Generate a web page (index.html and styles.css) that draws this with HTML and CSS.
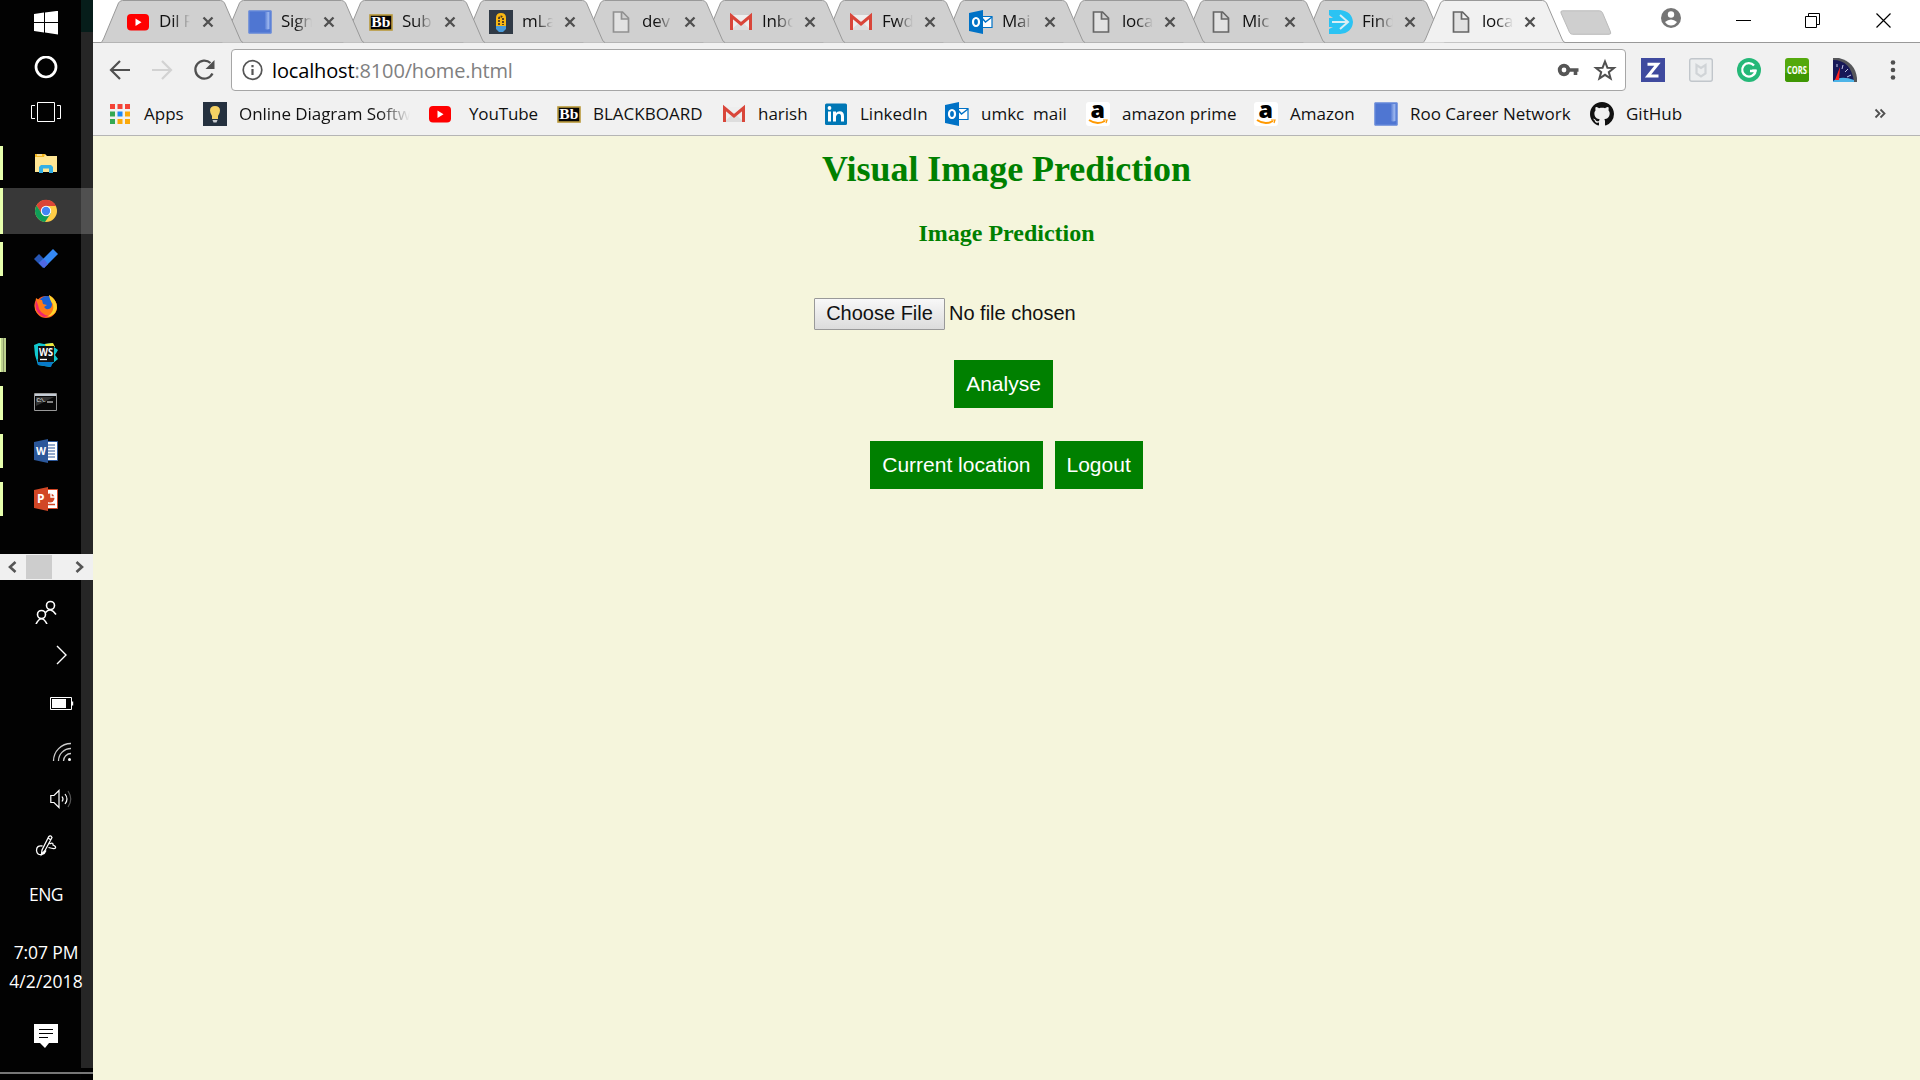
FILE: index.html
```html
<!DOCTYPE html>
<html lang="en">
<head>
<meta charset="utf-8">
<title>Visual Image Prediction</title>
<link rel="stylesheet" href="styles.css">
</head>
<body>
<svg class="defs" aria-hidden="true">
  <defs>
    <linearGradient id="roofill"><stop offset=".5" stop-color="#4f76d2"/><stop offset=".85" stop-color="#9db7ee"/><stop offset="1" stop-color="#5e84da"/></linearGradient>
    <symbol id="tab" viewBox="0 0 142 43"><path d="M0 42.5 Q1 42 2.500 39 L17.500 3 Q19 .5 21.500 .5 H119.500 Q122 .5 123.500 3 L139 39 Q140 42 142 42.500" stroke="#999"/></symbol>
    <symbol id="x" viewBox="0 0 24 24"><path d="M7.500 7.500 16.500 16.500M16.500 7.500 7.500 16.500" stroke="#505050" stroke-width="2.300"/></symbol>
    <symbol id="yt" viewBox="0 0 24 24"><rect x="1" y="4" width="22" height="16.500" rx="4" fill="#f00"/><path d="M9.500 8.500v7.500l6-3.700z" fill="#fff"/></symbol>
    <symbol id="roo" viewBox="0 0 24 24"><rect x=".5" y=".5" width="23" height="23" fill="#4f76d2"/><path d="M11 2h11v17q-8 2-11-6z" fill="url(#roofill)"/><path d="M1 1v22h22V1z" stroke="#6d8edc" fill="none"/></symbol>
    <symbol id="bb" viewBox="0 0 24 24"><rect x="1" y="5" width="22" height="15" fill="#050505" stroke="#b9993b" stroke-width="1.600"/><text x="2.300" y="17" textLength="19" lengthAdjust="spacingAndGlyphs" font-family="Liberation Serif,serif" font-weight="bold" font-size="14" fill="#fff">Bb</text></symbol>
    <symbol id="mlab" viewBox="0 0 24 24"><path fill="#303a46" d="M0 0h24v24H0z"/><path d="M7 16V8q0-5 5-5t5 5v8z" fill="#f9b814"/><path d="M10 15V8q2-3 4 0v7" fill="none" stroke="#45382b" stroke-width="1.800" stroke-dasharray="2 1"/><path d="M7 16h10v3l-3 3h-4l-3-3z" fill="#4a9bd9"/></symbol>
    <symbol id="doc" viewBox="0 0 24 24"><path d="M5 2h9l6 6v14H5zM13 2v7h7" fill="#e2e2e2" stroke="currentColor" stroke-width="1.700" transform="translate(-.5 0)"/></symbol>
    <symbol id="gm" viewBox="0 0 24 24"><path d="M2 5h20v15H2z" fill="#eee"/><path d="m2 20 10-9 10 9z" fill="#ddd"/><path d="M2.500 20V6L12 14l9.500-8v14" fill="none" stroke="#d9463a" stroke-width="3"/></symbol>
    <symbol id="ol" viewBox="0 0 24 24"><path d="M11 6.500h12v11H11z" fill="#fff" stroke="#0072c6" stroke-width="1.200"/><path d="m12 7 4.500 5L23 7" fill="none" stroke="#0072c6" stroke-width="1.500"/><path d="M0 3 14 0v24L0 21z" fill="#0072c6"/><ellipse cx="7" cy="12" rx="3" ry="4" fill="none" stroke="#fff" stroke-width="2.200"/></symbol>
    <symbol id="find" viewBox="0 0 24 24"><path d="M0 0h11q12 1 13 12-1 11-13 12H0v-5l4-2H0V8h4L0 5z" fill="#2bc3f3"/><path d="M3 12h16M11 5l8 7-8 7" fill="none" stroke="#d9eef4" stroke-width="2"/></symbol>
    <symbol id="amz" viewBox="0 0 24 24"><rect width="24" height="24" rx="3" fill="#fff"/><text x="4.500" y="16" font-family="Open Sans,sans-serif" font-weight="800" font-size="23" textLength="14.500" lengthAdjust="spacingAndGlyphs">a</text><path d="M3 18q8 5.500 16 1" fill="none" stroke="#ff9900" stroke-width="2"/><path d="M17 18h4l-1 3" fill="none" stroke="#ff9900" stroke-width="1.200"/></symbol>
    <symbol id="li" viewBox="0 0 24 24"><rect x="1" y="1.500" width="22" height="21.500" rx="1.500" fill="#0077b5"/><path d="M4 9.500h3v10H4zM9 9.500h3V11q1-1.800 3.700-1.800 4.300 0 4.300 5v5.300h-3v-5q0-2.700-2.200-2.700T12 14.500v5H9z" fill="#fff"/><circle cx="5.500" cy="6" r="1.900" fill="#fff"/></symbol>
    <symbol id="gh" viewBox="0 0 16 16"><path fill="#111" d="M8 0C3.580 0 0 3.580 0 8c0 3.540 2.290 6.530 5.470 7.590.4.070.55-.17.55-.38 0-.19-.01-.82-.01-1.490-2.010.37-2.530-.49-2.690-.94-.09-.23-.48-.94-.82-1.130-.28-.15-.68-.52-.01-.53.63-.01 1.080.58 1.230.82.72 1.210 1.870.87 2.330.66.070-.52.28-.87.510-1.070-1.780-.2-3.640-.89-3.640-3.950 0-.87.310-1.590.820-2.150-.08-.2-.36-1.020.080-2.120 0 0 .67-.21 2.200.82.640-.18 1.320-.27 2-.27s1.360.090 2 .27c1.530-1.040 2.200-.82 2.200-.82.44 1.100.16 1.920.080 2.120.510.560.820 1.270.820 2.150 0 3.070-1.870 3.750-3.650 3.950.290.250.540.730.540 1.480 0 1.070-.010 1.930-.010 2.200 0 .210.150.460.550.380A8.010 8.010 0 0 0 16 8c0-4.420-3.580-8-8-8z"/></symbol>
  </defs>
</svg>

<div class="desktop">
  <aside class="taskbar">
    <div class="apps">
      <div class="app short"><svg width="24" height="24"><path fill="#fff" d="M0 3 10 1.500V11H0zM11 1.400 24-.2V11H11zM0 12h10v9.500L0 20zM11 12h13v11.500l-13-1.900z"/></svg></div>
      <div class="app short"><svg width="24" height="24"><circle cx="12" cy="11" r="10" fill="none" stroke="#fff" stroke-width="2.700"/></svg></div>
      <div class="app short gap"><svg width="30" height="24"><path d="M6.500 1.500h17v19h-17zM4 4.500H.5v13H4M26 4.500h3.500v13H26" fill="none" stroke="#fff"/></svg></div>
      <div class="app open"><svg width="24" height="24"><path d="M1 3h10l2 2h10v16H1z" fill="#ffe694"/><path d="M1 3h10l-1 3H1z" fill="#f5b922"/><path d="M3 4h5" stroke="#fff"/><path d="M5 22v-6l2-2h10l2 2v6h-4v-4.500H9V22z" fill="#35b0e6"/></svg></div>
      <div class="app open current"><svg width="24" height="24"><circle cx="12" cy="12" r="11" fill="#ffcd46"/><path d="M2.500 6.500A11 11 0 0 1 22 7H12L7 14z" fill="#db4437"/><path d="M2.500 6.500A11 11 0 0 0 11 23l6-9-9 1z" fill="#0f9d58"/><circle cx="12" cy="12" r="5.200" fill="#fff"/><circle cx="12" cy="12" r="4.200" fill="#4285f4"/></svg></div>
      <div class="app open"><svg width="24" height="24"><path d="m0 12 5-5 5 5-1 9z" fill="#2756b5"/><path d="m5 16 14-14 5 5L10 21z" fill="#3589f5"/><path d="m5 16 5-4 4 5-4 4z" fill="#5069e5"/></svg></div>
      <div class="app"><svg width="24" height="24"><g transform="translate(0 -1)"><circle cx="12" cy="13" r="11" fill="#ff5b22"/><circle cx="13" cy="10" r="8" fill="#1a62d6"/><path d="M2 6v5q0 8 8 12-12-4-9-15zM2 4l3 2 3 0 1 4 4 1-3 2 2 2q6 1 6-5l-3-9q8 4 8 13-1 8-10 9Q-1 20 2 4z" fill="#ff7b18"/><path d="M15 1q8 5 8 13-2 8-10 9 8-5 6-13-3-3-4-9z" fill="#ffd52c"/><path d="M2 6q-3 12 8 17l5-1Q5 20 4 11z" fill="#f0246e"/></g></svg></div>
      <div class="app open grouped"><svg width="24" height="24"><path d="m0 2 5-2 5 1 8-1 2 4 4 3-3 5 3 4-6 5-2 3-12-2L1 12z" fill="#12c9cf"/><path d="m11 1 8-1 2 4h-9z" fill="#f3e93c"/><path d="m3 16 1 6 13 2 2-5z" fill="#087ac8"/><path fill="#101010" d="M4 3h16v16H4z"/><path d="M6 16.500h7" stroke="#fff" stroke-width="1.300"/><text x="5" y="12.500" textLength="14" lengthAdjust="spacingAndGlyphs" font-family="Open Sans,sans-serif" font-weight="bold" font-size="10" fill="#fff">WS</text></svg></div>
      <div class="app open"><svg width="24" height="24"><path fill="#080808" stroke="#999" d="M.5 2.500h22v17H.5z"/><path d="M1 3h21v2H1z" fill="#c5ccd5"/><path d="M2 6h18L2 15z" fill="#333"/><text x="2.500" y="11" textLength="10" font-family="Liberation Mono,monospace" font-size="6" fill="#eee">C:\.</text><path d="M13 11h6" stroke="#fff"/></svg></div>
      <div class="app open"><svg width="24" height="24"><path d="M13 2.500h10.500v19H13z" fill="#fff" stroke="#2b579a"/><path d="M14 6h7M14 9h7M14 12h7M14 15h7M14 18h7" stroke="#2b579a" stroke-width="1.200"/><path d="M0 3 14 0v24L0 21z" fill="#2b579a"/><text x="2" y="16" textLength="10" lengthAdjust="spacingAndGlyphs" font-family="Open Sans,sans-serif" font-weight="bold" font-size="11" fill="#fff">W</text></svg></div>
      <div class="app open"><svg width="24" height="24"><path d="M13 2.500h10.500v19H13z" fill="#fff" stroke="#d24726"/><circle cx="16" cy="11" r="4.500" fill="#d24726"/><path d="M17 5v5h5" fill="none" stroke="#fff" stroke-width="1.400"/><path d="M14 17.500h7" stroke="#d24726" stroke-width="1.500"/><path d="M0 3 14 0v24L0 21z" fill="#d24726"/><text x="3" y="16" font-family="Open Sans,sans-serif" font-weight="bold" font-size="12" fill="#fff">P</text></svg></div>
    </div>
    <div class="scroller">
      <svg width="10" height="12"><path d="M8.500 1 3 6l5.500 5" fill="none" stroke="#555" stroke-width="2.600"/></svg>
      <span class="thumb"></span>
      <svg width="10" height="12"><path d="M1.500 1 7 6l-5.500 5" fill="none" stroke="#555" stroke-width="2.600"/></svg>
    </div>
    <div class="tray">
      <div><svg width="24" height="24" fill="none" stroke="#fff" stroke-width="1.600"><circle cx="16.500" cy="5.500" r="4"/><circle cx="7.500" cy="14.500" r="4"/><path d="M11.500 12.500q5-6 10.500 2M2 24q5.500-10.500 11 0"/></svg></div>
      <div class="right"><svg width="24" height="24" fill="none" stroke="#fff" stroke-width="1.400"><path d="m7 3 9 9-9 9"/></svg></div>
      <div class="right"><svg width="24" height="24"><path d="M.5 6.500h21v12H.5z" fill="none" stroke="#fff"/><path d="M2 8h14v9H2zM22 10.500h1.200v4H22z" fill="#fff"/></svg></div>
      <div class="right"><svg width="24" height="24" fill="none" stroke="#ccc" stroke-width="1.300"><path d="M3.500 21A17.500 17.500 0 0 1 21 3.500M8.500 21A12.500 12.500 0 0 1 21 8.500M13.500 21A7.500 7.500 0 0 1 21 13.500"/><circle cx="19.500" cy="19.500" r="1.500" fill="#fff" stroke="none"/></svg></div>
      <div class="right"><svg width="24" height="24" fill="none" stroke="#fff" stroke-width="1.200"><path d="M.8 8.500H4L9 3.500v17l-5-5H.8zM12 9.500q2 2.500 0 5M15 7q4 5 0 10"/><path d="M18 4q5.500 8 0 16" stroke="#555"/></svg></div>
      <div><svg width="24" height="24" fill="none" stroke="#fff" stroke-width="1.300"><path d="M8 17 14.500 4q2-2.500 3.500.5l-7 13-3.500 4zM14 5l3 2M8.500 13q-6-1-6 4.500.5 5 5.500 4 3-1 4-4M15.500 11q4-2 3.500 1 3 1 2.500 3-1 1.500-7-.5"/></svg></div>
      <div class="label">ENG</div>
      <div class="label clock"><span class="time">7:07 PM</span><span class="date">4/2/2018</span></div>
      <div><svg width="24" height="24"><path d="M0 0h24v19h-9l-4 5-5-5H0z" fill="#fff"/><path d="M5 5.500h14M5 9.500h14M5 13.500h9" stroke="#000"/></svg></div>
    </div>
    <div class="show-desktop"></div>
  </aside>

  <main class="browser">
    <header class="tabstrip">
      <div class="tab"><svg class="shape"><use href="#tab"/></svg><svg class="fav"><use href="#yt"/></svg><span class="title">Dil F</span><svg class="close"><use href="#x"/></svg></div>
      <div class="tab"><svg class="shape"><use href="#tab"/></svg><svg class="fav"><use href="#roo"/></svg><span class="title">Sign</span><svg class="close"><use href="#x"/></svg></div>
      <div class="tab"><svg class="shape"><use href="#tab"/></svg><svg class="fav"><use href="#bb"/></svg><span class="title">Sub</span><svg class="close"><use href="#x"/></svg></div>
      <div class="tab"><svg class="shape"><use href="#tab"/></svg><svg class="fav"><use href="#mlab"/></svg><span class="title">mLa</span><svg class="close"><use href="#x"/></svg></div>
      <div class="tab"><svg class="shape"><use href="#tab"/></svg><svg class="fav pale"><use href="#doc"/></svg><span class="title">dev</span><svg class="close"><use href="#x"/></svg></div>
      <div class="tab"><svg class="shape"><use href="#tab"/></svg><svg class="fav"><use href="#gm"/></svg><span class="title">Inbo</span><svg class="close"><use href="#x"/></svg></div>
      <div class="tab"><svg class="shape"><use href="#tab"/></svg><svg class="fav"><use href="#gm"/></svg><span class="title">Fwd</span><svg class="close"><use href="#x"/></svg></div>
      <div class="tab"><svg class="shape"><use href="#tab"/></svg><svg class="fav"><use href="#ol"/></svg><span class="title">Mai</span><svg class="close"><use href="#x"/></svg></div>
      <div class="tab"><svg class="shape"><use href="#tab"/></svg><svg class="fav"><use href="#doc"/></svg><span class="title">loca</span><svg class="close"><use href="#x"/></svg></div>
      <div class="tab"><svg class="shape"><use href="#tab"/></svg><svg class="fav"><use href="#doc"/></svg><span class="title">Mic</span><svg class="close"><use href="#x"/></svg></div>
      <div class="tab"><svg class="shape"><use href="#tab"/></svg><svg class="fav"><use href="#find"/></svg><span class="title">Find</span><svg class="close"><use href="#x"/></svg></div>
      <div class="tab active"><svg class="shape"><use href="#tab"/></svg><svg class="fav"><use href="#doc"/></svg><span class="title">loca</span><svg class="close"><use href="#x"/></svg></div>
      <svg class="newtab" width="52" height="26"><path d="M2.500.8h37q2 0 3 2l8 19q1 2.500-1.500 2.500H12.500q-2 0-3-2L1 3Q.3.800 2.500.8z" fill="#cfcfcf" stroke="#bbb"/></svg>
      <div class="window">
        <svg class="user" width="20" height="20"><circle cx="10" cy="10" r="10" fill="#757575"/><circle cx="10" cy="6.500" r="3.200" fill="#fff"/><path d="M4 14q6-5 12 0-2.500 3.500-6 3.500T4 14z" fill="#fff"/></svg>
        <svg class="ctl" width="16" height="16"><path d="M0 7.500h15" stroke="#000"/></svg>
        <svg class="ctl" width="16" height="16"><path d="M.5 3.500h11v11H.5zM3.500 3V.5h11v11H12" fill="none" stroke="#000"/></svg>
        <svg class="ctl" width="16" height="16"><path d="m.5.5 14 14m0-14-14 14" stroke="#000" stroke-width="1.200"/></svg>
      </div>
    </header>

    <div class="toolbar">
      <svg class="nav" width="24" height="24" fill="none" stroke="#505050" stroke-width="2.200"><path d="M22 12H4M12 3l-9 9 9 9"/></svg>
      <svg class="nav" width="24" height="24" fill="none" stroke="#d2d2d2" stroke-width="2.200"><path d="M2 12h18M12 3l9 9-9 9"/></svg>
      <svg class="nav" width="24" height="24"><path d="M20.500 15.500a9 9 0 1 1-2-10.500" fill="none" stroke="#505050" stroke-width="2.300"/><path d="M22.500 2v9h-9z" fill="#505050"/></svg>
      <div class="omnibox">
        <svg width="22" height="22"><circle cx="10.500" cy="11" r="9.300" fill="none" stroke="#555" stroke-width="1.700"/><path d="M10.500 10v6M10.500 6v2.200" stroke="#555" stroke-width="2.200"/></svg>
        <span class="url"><b>localhost</b>:8100/home.html</span>
        <svg class="key" width="24" height="24"><circle cx="8" cy="12" r="4.300" fill="none" stroke="#555" stroke-width="3.800"/><path d="M12 12h10.500M19.500 11v6" stroke="#555" stroke-width="3.600"/></svg>
        <svg width="24" height="24"><path d="m12 3.500 2.400 6.200 6.600.3-5.200 4.100 1.800 6.400L12 16.800l-5.600 3.700 1.800-6.400L3 10l6.600-.3z" fill="none" stroke="#505050" stroke-width="2"/></svg>
      </div>
      <div class="extensions">
        <svg width="24" height="24"><path fill="#3f4a9f" d="M0 0h24v24H0z"/><path d="M6.500 6.200h10L7 18h10.500" fill="none" stroke="#fff" stroke-width="3"/></svg>
        <svg width="24" height="24"><rect x=".7" y=".7" width="22.600" height="22.600" rx="2" fill="#eceeef" stroke="#c1c6cb" stroke-width="1.400"/><path d="M7.500 7v8.500l4.500 3 4.500-3V7L12 10z" fill="none" stroke="#d0d4d7" stroke-width="2.200"/></svg>
        <svg width="24" height="24"><circle cx="12" cy="12" r="12" fill="#25b878"/><path d="M17 7.500A6.700 6.700 0 1 0 18.500 13H13" fill="none" stroke="#fff" stroke-width="2.300"/><path d="m15 11.500 4.500 0-.5 5z" fill="#fff"/></svg>
        <svg width="24" height="24"><rect width="24" height="24" rx="3" fill="#54a90d"/><path d="M0 15h24v6q0 3-3 3H3q-3 0-3-3z" fill="#3f9704"/><text x="2" y="16" font-family="Open Sans,sans-serif" font-weight="bold" font-size="11" fill="#fff" textLength="20" lengthAdjust="spacingAndGlyphs">CORS</text></svg>
        <svg width="24" height="24"><path d="M0 0h6q16 4 18 20v4H0z" fill="#55565a"/><path d="M0 2q18 0 21 22H0z" fill="#171858"/><path d="M0 23q8-6 21-1v2H0z" fill="#4db4e8"/><path d="m7 9-5 13h4z" fill="#f22"/><path d="M4 6v3M10 7l-1 4M15 11l-3 3M18 17l-4 2" stroke="#c5c9e8"/></svg>
        <svg class="menu" width="6" height="24"><circle cx="3" cy="4.500" r="2.300"/><circle cx="3" cy="12" r="2.300"/><circle cx="3" cy="19.500" r="2.300"/></svg>
      </div>
    </div>

    <nav class="bookmarks">
      <a class="bm w-apps"><svg><g fill="#f44336"><path d="M2 2h5v5H2zM9.500 2h5v5h-5zM17 2h5v5h-5z"/></g><path d="M2 9.500h5v5H2zM2 17h5v5H2z" fill="#34a853"/><path d="M9.500 9.500h5v5h-5z" fill="#1e88f5"/><path d="M17 9.500h5v5h-5zM9.500 17h5v5h-5zM17 17h5v5h-5z" fill="#fba90a"/></svg><span>Apps</span></a>
      <a class="bm w-diagram"><svg><path fill="#25313f" d="M0 0h24v24H0z"/><path d="M7 8.500Q7 4 12 4t5 4.500Q17 11 15 14v3H9v-3Q7 11 7 8.500z" fill="#f6d264"/><path d="M9.500 18h5l-1 2.500h-3z" fill="#c9ccd0"/></svg><span>Online Diagram Softw</span></a>
      <a class="bm w-youtube"><svg><use href="#yt"/></svg><span>YouTube</span></a>
      <a class="bm w-bb"><svg><use href="#bb"/></svg><span>BLACKBOARD</span></a>
      <a class="bm w-harish"><svg><use href="#gm"/></svg><span>harish</span></a>
      <a class="bm w-linkedin"><svg><use href="#li"/></svg><span>LinkedIn</span></a>
      <a class="bm w-umkc"><svg><use href="#ol"/></svg><span>umkc&nbsp; mail</span></a>
      <a class="bm w-prime"><svg><use href="#amz"/></svg><span>amazon prime</span></a>
      <a class="bm w-amazon"><svg><use href="#amz"/></svg><span>Amazon</span></a>
      <a class="bm w-roo"><svg><use href="#roo"/></svg><span>Roo Career Network</span></a>
      <a class="bm w-github"><svg><use href="#gh"/></svg><span>GitHub</span></a>
      <svg class="more" width="12" height="12"><path d="m1.500 1.500 4 4-4 4M6.500 1.500l4 4-4 4" fill="none" stroke="#505050" stroke-width="1.800"/></svg>
    </nav>

    <section class="page">
      <h1>Visual Image Prediction</h1>
      <h2>Image Prediction</h2>
      <div class="file"><button class="choose">Choose File</button><span>No file chosen</span></div>
      <button class="btn analyse">Analyse</button>
      <div class="actions"><button class="btn">Current location</button><button class="btn">Logout</button></div>
    </section>
  </main>
</div>
</body>
</html>
```
FILE: styles.css
```css
* { box-sizing: border-box; }
body { margin: 0; overflow: hidden; font-family: "Open Sans", "Noto Sans", sans-serif; }
svg { display: block; flex: none; }
.defs { position: absolute; width: 0; height: 0; }
.desktop { display: grid; grid-template-columns: 93px 1fr; height: 1080px; }

/* Vertical taskbar */
.taskbar {
  display: flex; flex-direction: column;
  background: linear-gradient(#061d1a 32px, #262626 32px, #262626 1068px, #000 1068px) 81px 0 / 12px 100% no-repeat #020202;
}
.apps { height: 554px; }
.app { display: flex; align-items: center; height: 48px; padding-left: 34px; }
.app.short { height: 45px; }
.app.short.gap { height: 49px; padding: 0 0 4px 31px; }
.app.open { background: linear-gradient(#e7ffad, #e7ffad) 0 7px / 3px 34px no-repeat; }
.app.current { background: linear-gradient(#e7ffad, #e7ffad) 0 0 / 3px 46px no-repeat #383838; height: 46px; margin: 1px 0; box-shadow: inset -12px 0 #505050; }
.app.grouped { background: linear-gradient(90deg, #e7ffad 1px, #bdd28f 1px, #bdd28f 3px, #8c9c6b 3px, #8c9c6b 4px, #bdd28f 4px) 0 7px / 6px 34px no-repeat; }
.scroller { display: flex; align-items: center; justify-content: space-between; height: 26px; padding: 0 8px 0 7px; background: #f0f0f0; }
.thumb { width: 26px; height: 24px; margin-right: 14px; background: #cdcdcd; }
.tray { display: grid; grid-template-rows: 48px 38px 58px 40px 54px 38px 60px 84px 56px; margin-top: 8px; }
.tray > div { display: flex; align-items: center; padding-left: 34px; }
.tray > .right { padding-left: 50px; }
.tray > .label { justify-content: center; padding: 0 1px 0 0; color: #fff; font-size: 17.500px; letter-spacing: -.5px; }
.tray > .clock { flex-direction: column; justify-content: center; padding: 2px 1px 0 0; line-height: 29px; white-space: nowrap; }
.tray .time { letter-spacing: -.1px; }
.tray .date { letter-spacing: .1px; }
.show-desktop { height: 2px; margin-top: 8px; background: #777; }

/* Browser chrome */
.browser { display: flex; flex-direction: column; min-width: 0; background: #f5f5dc; }
.tabstrip { position: relative; z-index: 1; display: flex; height: 43px; padding-left: 9px; background: linear-gradient(#999, #999) 0 42px / 100% 1px no-repeat #fff; }
.tab { position: relative; display: flex; flex: none; align-items: center; width: 142px; height: 43px; margin-right: -22px; padding: 1px 0 0 25px; color: #111; }
.tab:nth-child(1), .tab:nth-child(2) { margin-right: -21px; }
.tab:nth-child(1) { z-index: 12; padding-left: 24px; } .tab:nth-child(2) { z-index: 11; } .tab:nth-child(3) { z-index: 10; }
.tab:nth-child(4) { z-index: 9; } .tab:nth-child(5) { z-index: 8; } .tab:nth-child(6) { z-index: 7; }
.tab:nth-child(7) { z-index: 6; } .tab:nth-child(8) { z-index: 5; } .tab:nth-child(9) { z-index: 4; }
.tab:nth-child(10) { z-index: 3; } .tab:nth-child(11) { z-index: 2; }
.tab:nth-child(1) .title { margin-right: 8px; }
.tab.active { z-index: 20; }
.shape { position: absolute; left: -1px; top: 0; width: 142px; height: 43px; fill: #d0d0d0; z-index: -1; }
.active .shape { fill: #f1f1f1; }
.fav { width: 24px; height: 24px; color: #666; }
.fav.pale { color: #909090; }
.title { width: 31px; height: 24px; margin: 0 7px 0 9px; overflow: hidden; white-space: nowrap; font-size: 17px; line-height: 22px; letter-spacing: -.2px; -webkit-mask-image: linear-gradient(90deg, #000 14px, transparent 31px); mask-image: linear-gradient(90deg, #000 14px, transparent 31px); }
.close { width: 24px; height: 24px; margin-left: -2px; }
.newtab { margin: 10px 0 0 16px; }
.window { display: flex; flex: 1; align-items: flex-start; padding-left: 49px; }
.user { margin-top: 8px; margin-right: 55px; }
.ctl { margin-top: 13px; margin-right: 53px; }
.ctl + .ctl + .ctl { margin-right: 0; margin-left: 2px; }

.toolbar { display: flex; align-items: center; height: 53px; padding: 0 24px 0 15px; background: #f1f1f1; }
.nav { margin-right: 18px; }
.nav + .nav + .nav { margin-right: 15px; }
.omnibox { display: flex; align-items: center; width: 1395px; height: 42px; padding: 0 8px 0 10px; background: #fff; border: 1px solid #a6a6a6; border-radius: 4px; }
.url { flex: 1; margin-left: 8px; padding-top: 2px; font-size: 20px; line-height: 30px; letter-spacing: -.15px; color: #808080; }
.url b { font-weight: 400; color: #000; }
.key { margin-right: 13px; }
.extensions { display: flex; gap: 24px; margin-left: 15px; }
.menu { margin-left: 9px; fill: #505050; }

.bookmarks { display: flex; align-items: center; height: 40px; padding: 0 34px 4px 15px; background: #f1f1f1; border-bottom: 1px solid #b5b5b5; font-size: 17px; color: #111; }
.bm { display: flex; align-items: center; flex: none; gap: 12px; white-space: nowrap; line-height: 24px; }
.bm svg { width: 24px; height: 24px; }
.w-apps { width: 95px; }
.w-diagram { width: 225px; letter-spacing: -.05px; }
.w-diagram span { width: 172px; overflow: hidden; -webkit-mask-image: linear-gradient(90deg, #000 140px, transparent 171px); mask-image: linear-gradient(90deg, #000 140px, transparent 171px); }
.w-youtube { width: 129px; gap: 17px; }
.w-youtube span { letter-spacing: -.15px; }
.w-bb { width: 165px; }
.w-harish { width: 102px; }
.w-linkedin { width: 121px; }
.w-umkc { width: 141px; }
.w-prime { width: 168px; }
.w-amazon { width: 120px; }
.w-roo { width: 216px; }
.more { margin-left: auto; }

/* Page */
.page { display: flex; flex-direction: column; align-items: center; flex: 1; color: green; font-family: "Liberation Serif", serif; }
.page h1 { margin: 12px 0 0; font-size: 36px; line-height: 42px; letter-spacing: -.04px; }
.page h2 { margin: 29px 0 0; font-size: 24px; line-height: 28px; }
.page button { font-family: "Liberation Sans", Arial, sans-serif; }
.file { display: flex; align-items: center; gap: 4px; width: 385px; height: 32px; margin-top: 51px; font: 20px "Liberation Sans", Arial, sans-serif; color: #111; }
.choose { width: 131px; height: 32px; padding: 0 0 2px; font-size: 20px; color: #111; border: 1px solid #999; border-radius: 1px; background: linear-gradient(#f8f8f8, #dcdcdc); }
.file span { padding-bottom: 2px; }
.btn { height: 48px; padding: 0 12px; border: 0; background: green; color: #fff; font-size: 21px; }
.analyse { margin: 30px 6px 0 0; }
.actions { display: flex; gap: 12px; margin-top: 33px; }
```
